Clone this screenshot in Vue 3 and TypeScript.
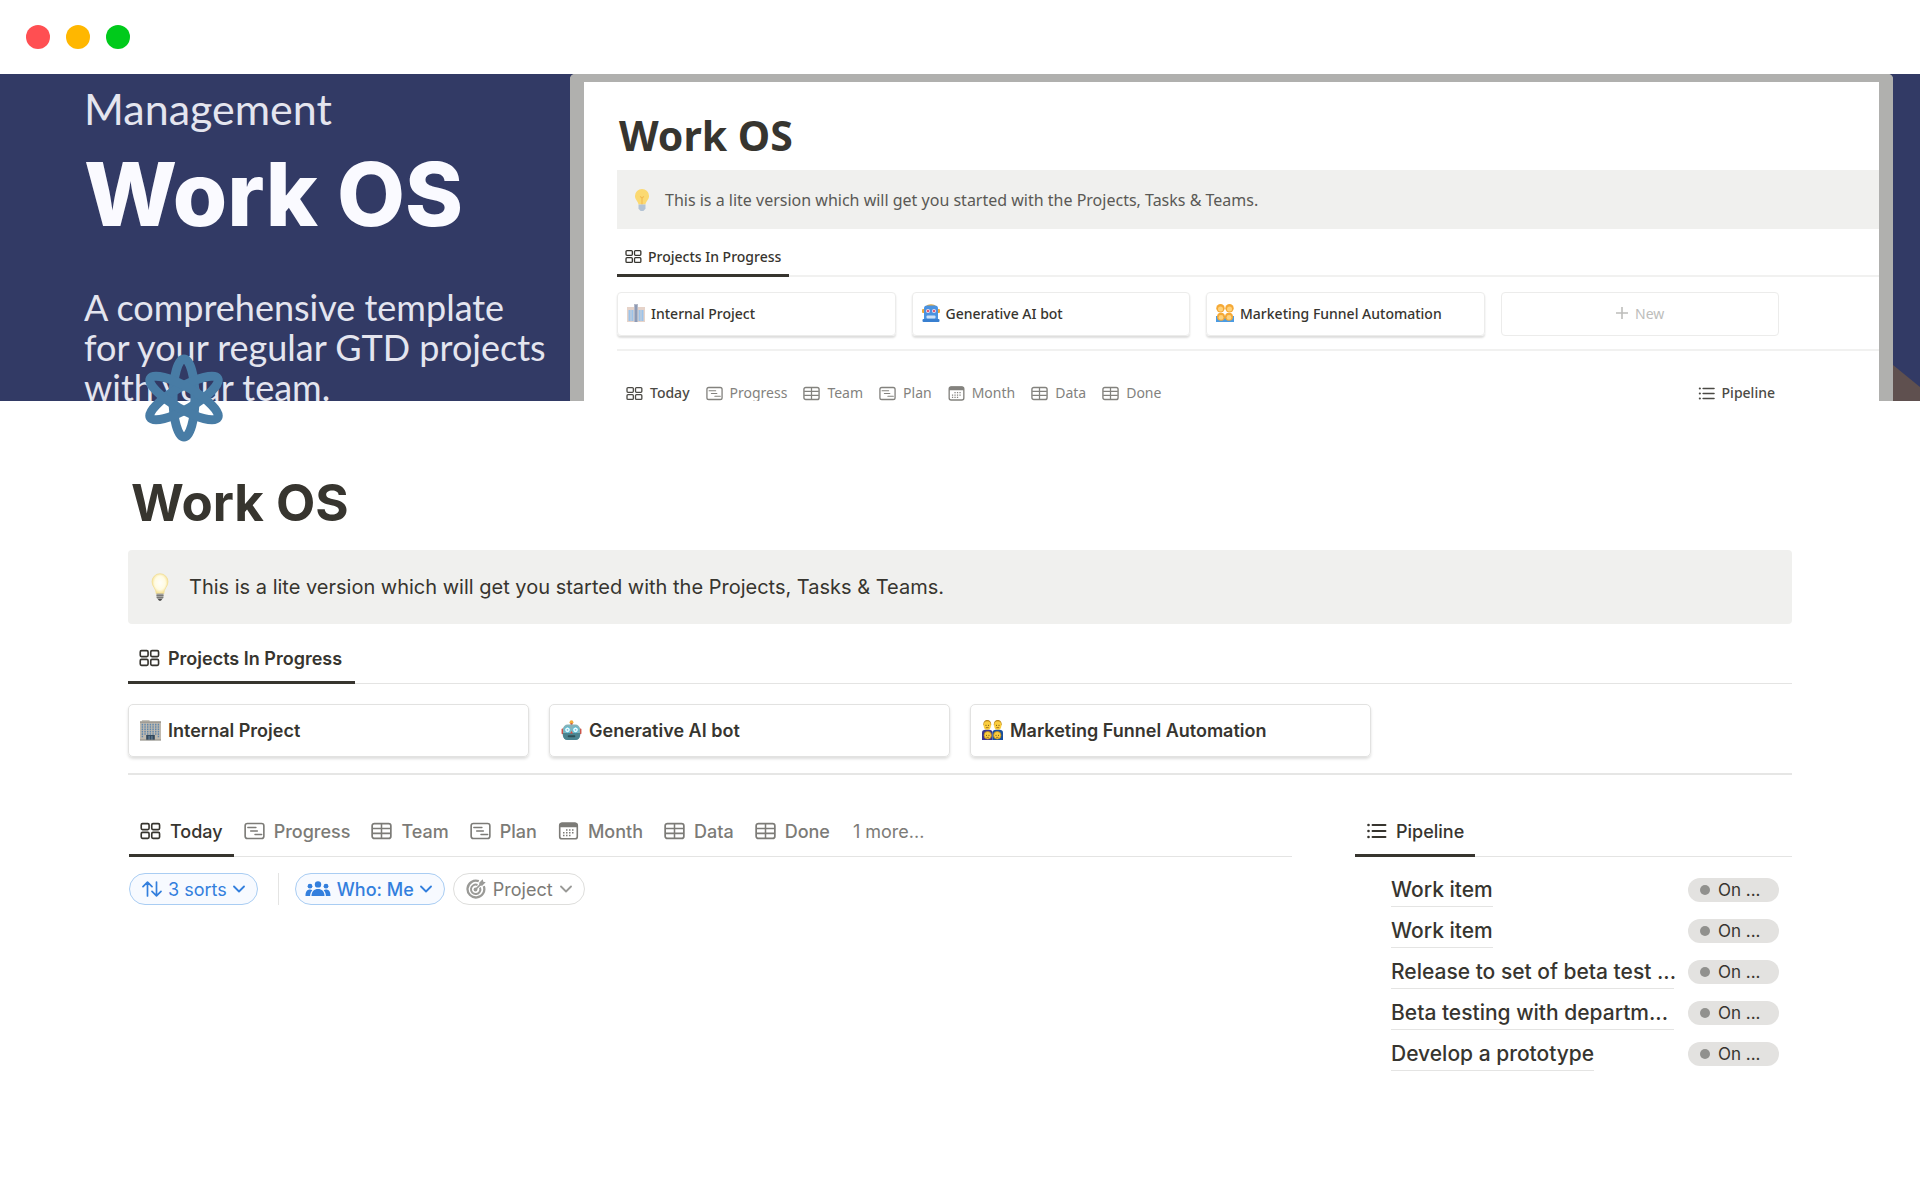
<script setup lang="ts">
interface Tab {
  label: string
  icon: string
}

interface Project {
  name: string
  emoji: string
}

interface WorkItem {
  name: string
  cut?: boolean
}

const noteText = 'This is a lite version which will get you started with the Projects, Tasks & Teams.'

const tabs: Tab[] = [
  { label: 'Today', icon: 'gallery' },
  { label: 'Progress', icon: 'timeline' },
  { label: 'Team', icon: 'table' },
  { label: 'Plan', icon: 'timeline' },
  { label: 'Month', icon: 'calendar' },
  { label: 'Data', icon: 'table' },
  { label: 'Done', icon: 'table' },
]

const projects: Project[] = [
  { name: 'Internal Project', emoji: 'office' },
  { name: 'Generative AI bot', emoji: 'robot' },
  { name: 'Marketing Funnel Automation', emoji: 'family' },
]

const workItems: WorkItem[] = [
  { name: 'Work item' },
  { name: 'Work item' },
  { name: 'Release to set of beta test ...', cut: true },
  { name: 'Beta testing with departm...', cut: true },
  { name: 'Develop a prototype' },
]
</script>

<template>
  <svg class="sprite" aria-hidden="true">
    <symbol id="gallery" viewBox="0 0 22 18">
      <g fill="none" stroke="currentColor" stroke-width="1.7">
        <rect x="1.3" y="1.3" width="8.2" height="6.2" rx="1.3" />
        <rect x="12.3" y="1.3" width="8.2" height="6.2" rx="1.3" />
        <rect x="1.3" y="10.5" width="8.2" height="6.2" rx="1.3" />
        <rect x="12.3" y="10.5" width="8.2" height="6.2" rx="1.3" />
      </g>
    </symbol>
    <symbol id="timeline" viewBox="0 0 22 18">
      <rect x="1.2" y="1.2" width="19.6" height="15.6" rx="2.4" fill="none" stroke="currentColor" stroke-width="1.7" />
      <path d="M4 5.4h8.5M7 9h7M11.5 12.6h7" fill="none" stroke="currentColor" stroke-width="1.5" stroke-linecap="round" />
    </symbol>
    <symbol id="table" viewBox="0 0 22 18">
      <rect x="1.2" y="1.2" width="19.6" height="15.6" rx="2.4" fill="none" stroke="currentColor" stroke-width="1.8" />
      <path d="M1.5 6.3h19M1.5 11.5h19M11 1.5v15" fill="none" stroke="currentColor" stroke-width="1.6" />
    </symbol>
    <symbol id="calendar" viewBox="0 0 20 18">
      <rect x="1.2" y="1.2" width="17.6" height="15.6" rx="2.4" fill="none" stroke="currentColor" stroke-width="1.6" />
      <path d="M1 5.2V3.2A2.6 2.6 0 0 1 3.6 .6h12.8A2.6 2.6 0 0 1 19 3.2v2z" fill="currentColor" />
      <path d="M7.5 8h9M4.5 10.8h12M4.5 13.6h9" fill="none" stroke="currentColor" stroke-width="1.5" stroke-dasharray="1.5 1.5" />
    </symbol>
    <symbol id="list" viewBox="0 0 20 18">
      <path d="M6 3h13M6 9h13M6 15h13" fill="none" stroke="currentColor" stroke-width="1.9" stroke-linecap="round" />
      <g fill="currentColor">
        <circle cx="2" cy="3" r="1.3" />
        <circle cx="2" cy="9" r="1.3" />
        <circle cx="2" cy="15" r="1.3" />
      </g>
    </symbol>
    <symbol id="chevron" viewBox="0 0 12 8">
      <path d="M1 1.5l5 5 5-5" fill="none" stroke="currentColor" stroke-width="1.8" stroke-linecap="round" stroke-linejoin="round" />
    </symbol>
    <symbol id="sort" viewBox="0 0 20 16">
      <path d="M5.5 15V1.3M1 5.7l4.5-4.5L10 5.7M14.5 1v13.7M10 10.3l4.5 4.5 4.5-4.5" fill="none" stroke="currentColor" stroke-width="1.7" stroke-linecap="round" stroke-linejoin="round" />
    </symbol>
    <symbol id="people" viewBox="0 0 26 16">
      <g fill="currentColor">
        <circle cx="13" cy="3.4" r="3.2" />
        <circle cx="5" cy="5.2" r="2.4" />
        <circle cx="21" cy="5.2" r="2.4" />
        <path d="M6.5 15c0-4.6 2.7-7 6.5-7s6.500 2.400 6.500 7z" />
        <path d="M.5 15c0-4.4 1.600-6.400 4.500-6.400.9 0 1.700.2 2.300.6C5.900 10.700 5.200 12.600 5.100 15z" />
        <path d="M25.500 15c0-4.400-1.600-6.400-4.500-6.400-.9 0-1.700.2-2.300.6 1.400 1.500 2.100 3.400 2.200 5.800z" />
      </g>
    </symbol>
    <symbol id="target" viewBox="0 0 20 20">
      <g fill="none" stroke="currentColor">
        <path d="M12.8 2.200A8.400 8.400 0 1 0 17.800 7.200" stroke-width="2.300" />
        <path d="M11.500 6A4.700 4.700 0 1 0 14 8.500" stroke-width="2" />
        <path d="M9.500 10.500L16 4" stroke-width="1.700" />
      </g>
      <circle cx="9.500" cy="10.500" r="1.900" fill="currentColor" />
      <path d="M13.200 3.800L16.700.3l.6 2.400 2.400.6-3.500 3.500-2.700-.4z" fill="currentColor" />
    </symbol>
    <symbol id="plus" viewBox="0 0 14 14">
      <path d="M7 1v12M1 7h12" stroke="currentColor" stroke-width="1.6" />
    </symbol>
    <symbol id="bulb" viewBox="0 0 18 28">
      <defs>
        <radialGradient id="bulb-glow" cx="50%" cy="45%" r="55%">
          <stop offset="0" stop-color="#fffefa" />
          <stop offset="0.6" stop-color="#fffbe2" />
          <stop offset="1" stop-color="#f5dd87" />
        </radialGradient>
      </defs>
      <path d="M9 .7a8 8 0 0 0-8 8c0 5 4 6.300 4.300 12.300h7.400C13 15 17 13.700 17 8.700a8 8 0 0 0-8-8z" fill="url(#bulb-glow)" stroke="#f0dc92" stroke-width=".7" />
      <path d="M5.500 20.400h7v4.300L10.600 27H7.400l-1.900-2.300z" fill="#a5a5a3" />
      <path d="M5.500 22.400h7M5.800 24.600h6.400" stroke="#676765" stroke-width=".8" />
      <path d="M7 26h4l-1 1.700H8z" fill="#4c4c4a" />
    </symbol>
    <symbol id="bulb-flat" viewBox="0 0 18 24">
      <path d="M9 0a7.700 7.700 0 0 0-7.700 7.700C1.300 12 5 13.500 5.200 17h7.600c.2-3.500 3.900-5 3.900-9.300A7.700 7.700 0 0 0 9 0z" fill="#fbd971" />
      <path d="M7 8l2 2 2-2M9 10v7" fill="none" stroke="#f2b950" stroke-width="1.2" />
      <path d="M5.200 17h7.600v4.500L10.500 24h-3l-2.300-2.500z" fill="#b3c3d4" />
    </symbol>
    <symbol id="office" viewBox="0 0 22 22">
      <rect x="2" y="0" width="8" height="2" fill="#c6c3bc" />
      <rect x="0" y="1.500" width="22" height="19.500" fill="#bfbab0" />
      <rect x="0" y="1.500" width="22" height="1.400" fill="#98948c" />
      <path d="M2.500 4v15M5.300 4v11.500M8.100 4v11.500M10.900 4v11.500M13.700 4v11.500M16.500 4v11.500M19.300 4v15" stroke="#5f86ac" stroke-width="1.500" stroke-dasharray="1.700 .8" />
      <rect x="6.500" y="15.700" width="9" height="5.300" fill="#34495c" />
      <path d="M9.500 16.700V21M12.500 16.700V21" stroke="#7fa2c0" stroke-width=".8" />
      <rect x="0" y="20.500" width="22" height="1" fill="#88857e" />
    </symbol>
    <symbol id="robot" viewBox="0 0 22 22">
      <circle cx="11" cy="2.300" r="2" fill="#f3ac37" />
      <rect x="10" y="3.300" width="2" height="2" fill="#c6554a" />
      <rect x=".6" y="9" width="3" height="6" rx="1" fill="#d24c3f" />
      <rect x="18.400" y="9" width="3" height="6" rx="1" fill="#d24c3f" />
      <rect x="2" y="4.800" width="18" height="16.200" rx="5" fill="#86b3b9" />
      <path d="M2 13.500h18V16a5 5 0 0 1-5 5H7a5 5 0 0 1-5-5z" fill="#4b8490" />
      <circle cx="6.800" cy="10.300" r="3" fill="#e9fbff" stroke="#45b2cd" stroke-width=".9" />
      <circle cx="15.200" cy="10.300" r="3" fill="#e9fbff" stroke="#45b2cd" stroke-width=".9" />
      <circle cx="6.800" cy="10.300" r=".9" fill="#6fc3da" />
      <circle cx="15.200" cy="10.300" r=".9" fill="#6fc3da" />
      <path d="M11 11.500l1.500 2.700h-3z" fill="#d24c3f" />
      <rect x="7" y="16" width="8" height="2" rx="1" fill="#2c5058" />
    </symbol>
    <symbol id="family" viewBox="0 0 22 22">
      <path d="M0 21v-8c0-2 2-3 5.500-3S11 11 11 13v8z" fill="#3a3690" />
      <path d="M11 21v-8c0-2 2-3 5.500-3S22 11 22 13v8z" fill="#174f9d" />
      <g fill="#b98720">
        <path d="M1.300 5.500C1.300 1.500 3 0 5.500 0s4.200 1.500 4.200 5.500z" />
        <path d="M12.300 5.500c0-4 1.700-5.500 4.200-5.500s4.200 1.500 4.200 5.500z" />
      </g>
      <g fill="#fbcd3d">
        <ellipse cx="5.500" cy="5.800" rx="3.800" ry="4.400" />
        <ellipse cx="16.500" cy="5.800" rx="3.800" ry="4.400" />
        <ellipse cx="6" cy="16" rx="3.900" ry="4" stroke="#b98720" stroke-width=".8" />
        <ellipse cx="16" cy="16" rx="3.900" ry="4" stroke="#b98720" stroke-width=".8" />
      </g>
      <g fill="#5b4211">
        <circle cx="4.200" cy="5.500" r=".6" /><circle cx="6.800" cy="5.500" r=".6" />
        <circle cx="15.200" cy="5.500" r=".6" /><circle cx="17.800" cy="5.500" r=".6" />
        <circle cx="4.700" cy="16" r=".6" /><circle cx="7.300" cy="16" r=".6" />
        <circle cx="14.700" cy="16" r=".6" /><circle cx="17.300" cy="16" r=".6" />
      </g>
      <path d="M4 8h3M15 8h3M4.800 18.200h2.400M14.800 18.200h2.400" stroke="#8c5a17" stroke-width=".8" />
    </symbol>
    <symbol id="office-flat" viewBox="0 0 18 18">
      <rect x="0" y="3" width="18" height="15" fill="#e6d3c9" />
      <path d="M1.500 6h5v11h-5zM11.500 6h5v11h-5z" fill="#9cc3ea" />
      <path d="M4 5v12M14 5v12" stroke="#d9d3d3" stroke-width=".8" />
      <rect x="7" y="0" width="4" height="18" fill="#b4b9c8" />
      <path d="M9 1v17" stroke="#7386a8" stroke-width="1.200" />
    </symbol>
    <symbol id="robot-flat" viewBox="0 0 18 18">
      <path d="M4 2.500C5.500-.5 12.500-.5 14 2.500z" fill="#e0a640" />
      <rect x="0" y="5" width="18" height="4" rx="1" fill="#eda93a" />
      <rect x="2" y="1.500" width="14" height="16.500" rx="3" fill="#4a92e0" />
      <rect x=".5" y="15" width="17" height="3" rx="1" fill="#387fd0" />
      <circle cx="6" cy="7" r="2" fill="#f4d7e2" /><circle cx="12" cy="7" r="2" fill="#f4d7e2" />
      <circle cx="6" cy="7" r="1.100" fill="#dc3e5b" /><circle cx="12" cy="7" r="1.100" fill="#dc3e5b" />
      <rect x="4.500" y="11.500" width="9" height="3" rx="1" fill="#cfe2f5" />
    </symbol>
    <symbol id="family-flat" viewBox="0 0 18 18">
      <path d="M0 18v-6h18v6z" fill="#4b9be2" />
      <g fill="#f5a936">
        <circle cx="4.500" cy="4.300" r="4.200" /><circle cx="13.500" cy="4.300" r="4.200" />
        <circle cx="5" cy="12.800" r="4" /><circle cx="13" cy="12.800" r="4" />
      </g>
      <g fill="#ffd27b">
        <circle cx="4.500" cy="5" r="2.500" /><circle cx="13.500" cy="5" r="2.500" />
        <circle cx="5" cy="13.400" r="2.400" /><circle cx="13" cy="13.400" r="2.400" />
      </g>
    </symbol>
  </svg>

  <div class="window">
    <header class="titlebar">
      <span class="light red"></span>
      <span class="light amber"></span>
      <span class="light green"></span>
    </header>

    <section class="cover" aria-label="Cover">
      <div class="pitch">
        <p class="kicker">Management</p>
        <p class="brand">Work OS</p>
        <p class="blurb">A comprehensive template<br />for your regular GTD projects<br />with your team.</p>
      </div>
      <div class="preview">
        <p class="preview-title">Work OS</p>
        <div class="preview-note">
          <svg class="preview-bulb"><use href="#bulb-flat" /></svg>
          <span>{{ noteText }}</span>
        </div>
        <div class="preview-heading">
          <span class="preview-current"><svg class="preview-icon"><use href="#gallery" /></svg>Projects In Progress</span>
        </div>
        <div class="preview-cards">
          <div v-for="project in projects" :key="project.name" class="preview-card">
            <svg class="preview-emoji"><use :href="`#${project.emoji}-flat`" /></svg>{{ project.name }}
          </div>
          <div class="preview-new"><svg class="preview-plus"><use href="#plus" /></svg>New</div>
        </div>
        <div class="preview-tabs">
          <span v-for="(tab, index) in tabs" :key="tab.label" class="preview-tab" :class="{ active: index === 0 }">
            <svg class="preview-icon"><use :href="`#${tab.icon}`" /></svg>{{ tab.label }}
          </span>
          <span class="preview-tab active last"><svg class="preview-icon"><use href="#list" /></svg>Pipeline</span>
        </div>
      </div>
      <svg class="corner" viewBox="0 0 27 36" preserveAspectRatio="none" aria-hidden="true">
        <path d="M0 0L27 22V36H0z" fill="#5f504f" />
      </svg>
    </section>

    <main class="page">
      <svg class="page-icon" viewBox="0 0 78 88" aria-hidden="true">
        <g fill="none" stroke="#487ca5" stroke-width="9">
          <ellipse cx="39" cy="44" rx="11" ry="39" />
          <ellipse cx="39" cy="44" rx="11" ry="39" transform="rotate(60 39 44)" />
          <ellipse cx="39" cy="44" rx="11" ry="39" transform="rotate(-60 39 44)" />
        </g>
      </svg>
      <h1>Work OS</h1>

      <aside class="callout">
        <svg class="bulb"><use href="#bulb" /></svg>
        <span>{{ noteText }}</span>
      </aside>

      <nav class="tabs" aria-label="Projects">
        <button type="button" class="tab active heading"><svg class="icon"><use href="#gallery" /></svg>Projects In Progress</button>
      </nav>
      <div class="cards">
        <a v-for="project in projects" :key="project.name" href="#" class="card">
          <svg class="emoji"><use :href="`#${project.emoji}`" /></svg>{{ project.name }}
        </a>
      </div>
      <hr />

      <div class="columns">
        <section class="board">
          <nav class="tabs" aria-label="Task views">
            <button v-for="(tab, index) in tabs" :key="tab.label" type="button" class="tab" :class="{ active: index === 0 }">
              <svg class="icon"><use :href="`#${tab.icon}`" /></svg>{{ tab.label }}
            </button>
            <button type="button" class="tab more">1 more...</button>
          </nav>
          <div class="filters">
            <button type="button" class="pill blue"><svg class="sort"><use href="#sort" /></svg>3 sorts<svg class="chevron"><use href="#chevron" /></svg></button>
            <span class="rule"></span>
            <button type="button" class="pill blue strong"><svg class="people"><use href="#people" /></svg>Who: Me<svg class="chevron"><use href="#chevron" /></svg></button>
            <button type="button" class="pill grey"><svg class="target"><use href="#target" /></svg>Project<svg class="chevron"><use href="#chevron" /></svg></button>
          </div>
        </section>

        <section class="pipeline">
          <nav class="tabs" aria-label="Pipeline views">
            <button type="button" class="tab active"><svg class="icon"><use href="#list" /></svg>Pipeline</button>
          </nav>
          <ul class="items">
            <li v-for="(item, index) in workItems" :key="index">
              <span class="item-name"><a href="#" :class="{ cut: item.cut }">{{ item.name }}</a></span>
              <span class="status"><span class="dot"></span>On ...</span>
            </li>
          </ul>
        </section>
      </div>
    </main>
  </div>
</template>

<style>
body {
  margin: 0;
  background: #fff;
}
</style>

<style scoped>
.sprite {
  position: absolute;
  width: 0;
  height: 0;
}

.window {
  color: #37352f;
  font-family: Inter, "Liberation Sans", sans-serif;
}

svg {
  flex: none;
}

p,
h1,
ul {
  margin: 0;
}

.titlebar {
  display: flex;
  align-items: center;
  gap: 16px;
  height: 74px;
  padding-left: 26px;
}

.light {
  width: 24px;
  height: 24px;
  border-radius: 50%;
}

.red { background: #ff4f52; }
.amber { background: #ffb700; }
.green { background: #00ca1b; }

/* Cover banner */
.cover {
  display: flex;
  align-items: flex-end;
  height: 327px;
  overflow: hidden;
  background: #323a65;
}

.pitch {
  flex: 0 0 486px;
  align-self: flex-start;
  padding: 11px 0 0 84px;
  color: #e4e5ef;
  font-family: Lato, "Open Sans", sans-serif;
  white-space: nowrap;
}

.kicker {
  font-size: 43px;
  line-height: 48px;
}

.brand {
  margin-top: 19px;
  color: #fafaff;
  font-family: Inter, sans-serif;
  font-size: 88px;
  font-weight: 800;
  line-height: 84px;
}

.blurb {
  margin-top: 51px;
  font-size: 36px;
  line-height: 40px;
}

.preview {
  flex: 1;
  box-sizing: border-box;
  height: 100%;
  min-width: 0;
  padding: 25px 0 0 33px;
  overflow: hidden;
  border: 14px solid #b0b0ae;
  border-width: 8px 14px 0;
  border-radius: 5px 5px 0 0;
  background: #fff;
  font-family: "Noto Sans", "Open Sans", sans-serif;
  font-size: 14px;
  white-space: nowrap;
}

.preview-title {
  padding-left: 2px;
  font-size: 41px;
  font-weight: 700;
  line-height: 56px;
}

.preview-note {
  display: flex;
  align-items: center;
  gap: 14px;
  height: 59px;
  margin-top: 7px;
  padding-left: 16px;
  background: #f0f0ee;
  color: #5a5955;
  font-size: 16px;
}

.preview-bulb {
  width: 18px;
  height: 22px;
}

.preview-heading {
  display: flex;
  height: 42px;
  margin-top: 6px;
  box-shadow: inset 0 -2px #f1f1f0;
}

.preview-current {
  display: flex;
  align-items: center;
  box-sizing: border-box;
  gap: 6px;
  padding: 3px 8px 0;
  border-bottom: 3px solid #37352f;
  font-weight: 500;
}

.preview-icon {
  width: 17px;
  height: 15px;
}

.preview-cards {
  display: grid;
  grid-template-columns: repeat(4, 1fr);
  gap: 16px;
  margin-top: 15px;
  padding: 0 100px 13px 0;
  border-bottom: 2px solid #f1f1f0;
}

.preview-card,
.preview-new {
  display: flex;
  align-items: center;
  gap: 6px;
  box-sizing: border-box;
  height: 44px;
  padding: 0 9px 2px;
  border: 1px solid #ececeb;
  border-radius: 4px;
  font-weight: 500;
}

.preview-card {
  box-shadow: 0 2px 2px #dededd;
}

.preview-new {
  justify-content: center;
  color: #bdbdbb;
  font-weight: 400;
}

.preview-plus {
  width: 14px;
  height: 14px;
}

.preview-emoji {
  width: 18px;
  height: 18px;
}

.preview-tabs {
  display: flex;
  gap: 16px;
  margin-top: 32px;
  padding: 0 104px 0 9px;
  line-height: 20px;
}

.preview-tab {
  display: flex;
  align-items: center;
  gap: 7px;
  color: #83827e;
}

.preview-tab.active {
  color: #4b4a45;
  font-weight: 500;
}

.last {
  margin-left: auto;
}

.corner {
  width: 27px;
  height: 36px;
}

/* Page */
.page {
  padding: 0 128px 120px;
}

.page-icon {
  position: relative;
  display: block;
  width: 78px;
  height: 88px;
  margin: -47px 0 0 17px;
}

h1 {
  margin: 31px 0 17px 3px;
  font-size: 51px;
  font-weight: 700;
  line-height: 60px;
}

.callout {
  display: flex;
  align-items: center;
  gap: 20px;
  height: 74px;
  padding-left: 23px;
  border-radius: 4px;
  background: #f0f0ee;
  font-size: 20px;
}

.bulb {
  width: 18px;
  height: 28px;
}

.tabs {
  display: flex;
  height: 52px;
  box-shadow: inset 0 -1px #e4e4e3;
  white-space: nowrap;
}

.callout + .tabs {
  margin-top: 8px;
}

button {
  margin: 0;
  background: none;
  font-family: inherit;
  cursor: pointer;
}

.tab {
  display: flex;
  align-items: center;
  gap: 9px;
  padding: 0 11px 0 10px;
  border: 0 solid transparent;
  border-width: 3px 0;
  color: #7c7b77;
  font-size: 18px;
  font-weight: 500;
}

.tab.active {
  padding-left: 11px;
  border-bottom-color: #37352f;
  color: #37352f;
}

.tab.heading {
  gap: 8px;
  padding-right: 13px;
  font-weight: 600;
}

.tab.more {
  padding-left: 12px;
  font-weight: 400;
}

.icon {
  width: 21px;
  height: 18px;
}

.cards {
  display: grid;
  grid-template-columns: repeat(4, 1fr);
  gap: 20px;
  margin-top: 20px;
}

.card {
  display: flex;
  align-items: center;
  gap: 7px;
  box-sizing: border-box;
  height: 53px;
  padding: 0 11px;
  border: 1px solid #e2e2e1;
  border-radius: 5px;
  box-shadow: 0 2px 3px #dededd;
  color: inherit;
  font-size: 18px;
  font-weight: 600;
  text-decoration: none;
}

.emoji {
  width: 21px;
  height: 21px;
}

hr {
  height: 2px;
  margin: 16px 0 0;
  border: 0;
  background: #e6e6e5;
}

.columns {
  display: grid;
  grid-template-columns: minmax(0, 1fr) 437px;
  gap: 63px;
  margin-top: 30px;
}

.board {
  margin-left: 1px;
}

.filters {
  display: flex;
  gap: 8px;
  margin-top: 16px;
}

.pill {
  display: flex;
  align-items: center;
  gap: 6px;
  height: 32px;
  padding: 0 12px;
  border: 1px solid #dededc;
  border-radius: 16px;
  color: #7c7b77;
  font-size: 18px;
}

.blue {
  border-color: #a9cdf3;
  background: #f7faff;
  color: #337fdd;
}

.strong {
  padding-left: 9px;
  font-weight: 500;
}

.grey {
  gap: 7px;
}

.rule {
  width: 1px;
  margin: 0 8px 0 12px;
  background: #e4e4e3;
}

.sort {
  width: 20px;
  height: 16px;
}

.people {
  width: 26px;
  height: 16px;
}

.target {
  width: 20px;
  height: 20px;
}

.grey svg {
  color: #9a9a97;
}

.chevron {
  width: 12px;
  height: 8px;
}

.items {
  margin-top: 12px;
  padding: 0 13px 0 36px;
  list-style: none;
}

.items li {
  display: flex;
  align-items: center;
  gap: 14px;
  height: 41px;
}

.item-name {
  display: flex;
  flex: 1;
  min-width: 0;
}

.item-name a {
  padding-top: 1px;
  border-bottom: 1px solid #e4e4e3;
  color: inherit;
  font-size: 21px;
  font-weight: 500;
  line-height: 32px;
  text-decoration: none;
  white-space: nowrap;
}

.item-name .cut {
  width: 100%;
}

.status {
  display: flex;
  align-items: center;
  gap: 8px;
  box-sizing: border-box;
  width: 91px;
  height: 24px;
  padding-left: 12px;
  border-radius: 12px;
  background: #e3e2e0;
  font-size: 17px;
}

.dot {
  width: 10px;
  height: 10px;
  border-radius: 50%;
  background: #91918e;
}
</style>
